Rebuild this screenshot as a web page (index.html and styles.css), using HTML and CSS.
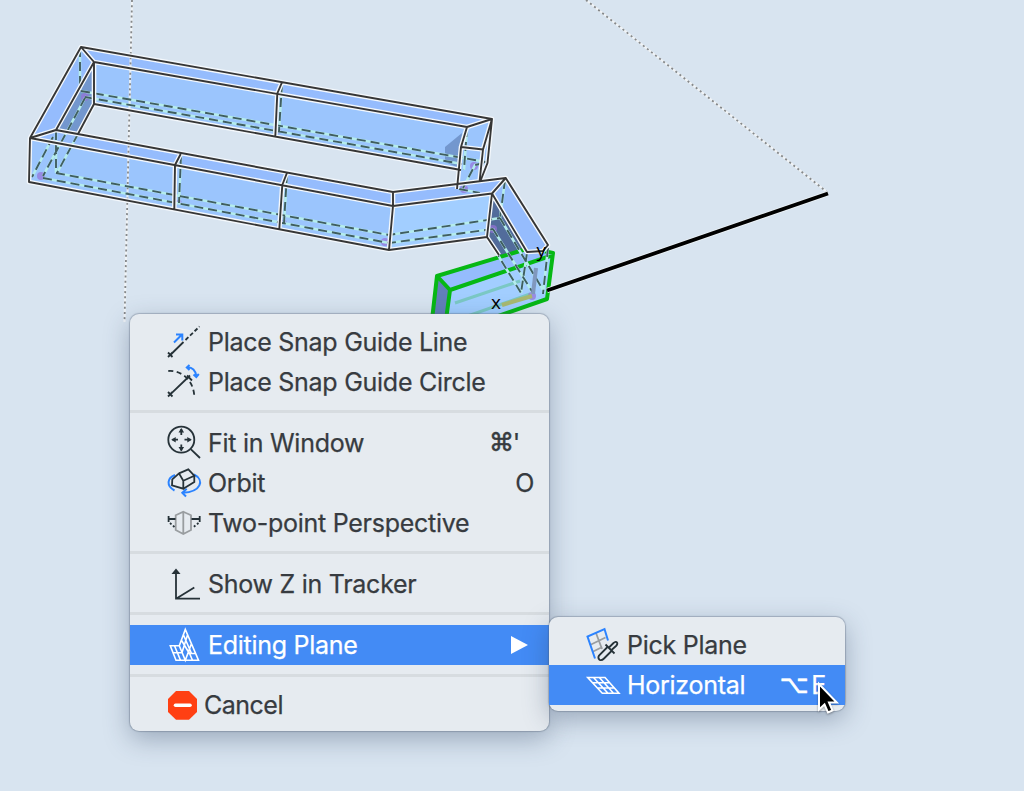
FILE: index.html
```html
<!DOCTYPE html>
<html lang="en">
<head>
    <meta charset="UTF-8">
    <meta name="viewport" content="width=device-width, initial-scale=1.0">
    <title>Editing Plane</title>
    <link rel="stylesheet" href="styles.css">
</head>
<body>
    <div class="viewport">
        <svg class="scene" width="1024" height="791" viewBox="0 0 1024 791">
            <defs>
                <path id="hidden" d="M81 91 L486 162 M85 97 L462 164 M56 173 L389 235 L500 218 M43 178 L389 243 L493 229 M80 48 V91 M56 131 V173 M282 84 L279 131 M181 155 L179 203 M287 174 L284 223 M392 208 L389 250 M85 98 L43 176 M53 137 L32 177 M78 134 L57 173 M467 128 L464 170 M505 180 L500 218 M500 218 L543 290 M493 229 L533 293 M487 237 L521 293 M527 253 L521 293 M548 248 L543 294 M484 163 L475 165 L463 188 M459 189 L480 193"/>
                <path id="edges" d="M81 47 L492 119 L467 127 L94 62Z M94 62 V104 L78 134 M94 104 L461 170 M281.700 83 L277.300 93.500 L275.300 136.500 M81 47 L30 138 M94 62 L56 130 M30 138 L56 130 L393 192 L505.700 178 L492 193.500 L393 206 L30 138 L29 182 L389 250 L487 237 L492 193.500 M180.700 154 L175 165 L174.300 208.700 M286.700 173.500 L282.300 185 L279.300 229 M393 192 V206 L389 250 M505.700 178 L548 245 L543 251 L527 252 L492 193.500 M487 237 L499 255 M467 127 L461 147 L457 189 M461 147 L483 149.500 L492 119 L487.500 163 L480 182 M483 149.500 L479.500 182"/>
                <path id="guides" d="M132 0 L124.500 322 M586 0 L827 192"/>
            </defs>

            <!-- back wall -->
            <path class="top" d="M81 47 L492 119 L467 127 L94 62Z"/>
            <path class="face" d="M94 62 L467 127 L461 147 L461 170 L94 104Z"/>
            <path class="top" d="M81 47 L94 62 L56 130 L30 138Z"/>
            <path class="shade" d="M94 62 V104 L78 134 L56 130Z"/>
            <path class="shade" d="M445 147 L462 133 L459 168 L445 162Z"/>
            <!-- wall end -->
            <path class="face" d="M467 127 L492 119 L487 163 L479 193 L457 189 L461 147Z"/>
            <!-- front wall -->
            <path class="top" d="M30 138 L56 130 L393 192 L505 178 L492 193.500 L393 206Z"/>
            <path class="face" d="M30 138 L393 206 L389 250 L29 182Z"/>
            <path class="light" d="M393 206 L492 193.500 L487 237 L389 250Z"/>
            <path class="shade-dark" d="M492 193.500 L527 252 L526 262 L503 262 L487 237Z"/>
            <!-- selected block -->
            <path class="top" d="M437 276 L530 248 L553 253 L450 290Z"/>
            <path class="light" d="M450 290 L553 253 L547 299 L490 320 H446Z"/>
            <path class="block-end" d="M437 276 L450 290 L446 320 H432Z"/>
            <path class="axis-green" d="M455 303 L520 281 M462 318 L530 294"/>
            <path class="selection" d="M432 320 L437 276 L530 248 L553 253 L547 299 L490 319 M437 276 L450 290 L446 320 M450 290 L553 255"/>
            <!-- right return -->
            <path class="top" d="M505.700 178 L548 245 L543 251 L527 252 L492 193.500Z"/>

            <use href="#guides" class="guide"/>
            <use href="#guides" class="guide-dots"/>

            <g class="markers">
                <circle cx="85" cy="97" r="4"/><circle cx="41" cy="176" r="4"/>
                <circle cx="179" cy="202" r="2.500"/><circle cx="284" cy="222" r="2.500"/>
                <circle cx="279" cy="131" r="2.500"/><circle cx="385" cy="242" r="4"/>
                <circle cx="474" cy="166" r="4"/><circle cx="464" cy="189" r="4"/>
                <circle cx="493" cy="229" r="4"/><circle cx="532" cy="296" r="4"/>
            </g>

            <use href="#hidden" class="hidden-base"/>
            <use href="#hidden" class="hidden-dash"/>
            <use href="#edges" class="edge-halo"/>
            <use href="#edges" class="edge"/>

            <path class="axis-x" d="M502 305 L532 296"/>
            <path class="axis-y" d="M533 294 L536 268"/>
            <path class="ray-halo" d="M547 290.500 L828 193.500"/>
            <path class="ray" d="M547 290.500 L828 193.500"/>
            <text class="axis-label" x="491" y="309">x</text>
            <text class="axis-label" x="536.500" y="257">y</text>
        </svg>

        <div class="menu main-menu">
            <div class="item">
                <svg class="icon" viewBox="0 0 40 40">
                    <path d="M4 30.500 L8.500 35 M8.500 30.500 L4 35 M6.300 33 L19.500 20"/>
                    <path d="M21.500 18 L35.500 4.500" stroke-dasharray="4 2.300"/>
                    <path class="blue" d="M10 20.500 L18 12.500 M12 12.500 H18.300 V18.500"/>
                </svg>
                <span class="label">Place Snap Guide Line</span>
            </div>
            <div class="item">
                <svg class="icon" viewBox="0 0 40 40">
                    <path d="M4 30 L8.500 34.500 M8.500 30 L4 34.500 M6.300 32.300 L26 13.500 M23 13.500 L28 18.500"/>
                    <path d="M4.300 9 C18 8 30 19 30.300 35" stroke-dasharray="5 3.500"/>
                    <path class="blue" d="M23.500 5.300 Q31 5.500 32.300 14 M25.500 3 L22.800 5.500 L25.500 8 M29.500 12.500 L32.300 15 L34.800 12"/>
                </svg>
                <span class="label">Place Snap Guide Circle</span>
            </div>
            <div class="separator"></div>
            <div class="item">
                <svg class="icon" viewBox="0 0 40 40">
                    <circle cx="17.300" cy="16.700" r="13"/>
                    <path d="M27 26.300 L36 35 M17.300 6 V12 M17.300 21.500 V27.500 M8.500 16.700 H14 M20.500 16.700 H26.500"/>
                    <path class="fill" d="M14.500 9.500 L17.300 5 L20.100 9.500Z M14.500 24 L17.300 28.500 L20.100 24Z M11.700 13.900 L7.200 16.700 L11.700 19.500Z M23.300 13.900 L27.800 16.700 L23.300 19.500Z"/>
                </svg>
                <span class="label">Fit in Window</span>
                <span class="keys keys-fit"><span class="symbol command">⌘</span>'</span>
            </div>
            <div class="item">
                <svg class="icon" viewBox="0 0 40 40">
                    <path class="blue" d="M11 12 C3 15 2 23 10.500 27.500 M30 11.500 C41 17 37 29 19 29.700 M22.700 25.700 L18.300 29.700 L22 33.500"/>
                    <path d="M8.300 16.300 L15 10.300 L19.300 17.700 V25.700 L8 22.300Z M15 10.300 L24.300 6.300 L30.300 12.700 L19.300 17.700 M30.300 12.700 V19 L19.300 25.700"/>
                </svg>
                <span class="label">Orbit</span>
                <span class="keys">O</span>
            </div>
            <div class="item">
                <svg class="icon" viewBox="0 0 40 40">
                    <path class="gray" d="M19.300 8.700 L27 12.300 V27 L19.300 31 L11.700 27 V12.300Z M19.300 8.700 V31"/>
                    <path d="M4.600 13 V19 M4.600 16 H11.500 M27.500 16 H35.700 M35.700 13 V19"/>
                    <path d="M6 20 L11 24.500 M34.500 20 L29 24.500" stroke-dasharray="2 2"/>
                </svg>
                <span class="label">Two-point Perspective</span>
            </div>
            <div class="separator"></div>
            <div class="item">
                <svg class="icon" viewBox="0 0 40 40">
                    <path d="M12 7 V34.700 H36 M12 34.700 L30.300 23.500"/>
                    <path class="fill" d="M7.500 10 L12 4.500 L16.500 10Z"/>
                </svg>
                <span class="label">Show Z in Tracker</span>
            </div>
            <div class="separator"></div>
            <div class="item selected">
                <svg class="icon" viewBox="0 0 40 40">
                    <path d="M14.800 20.700 H6.300 L12 35.300 H34.500 L21.300 4.500 L15.300 20.700 L21.300 35.300 L27.500 18.500 M9 27.800 H17.500 M10.500 20.700 L16.500 35.300 M17.300 15 L24.500 27 M19.500 10 L27.500 28.500 M23.500 10 L18 27.500 M24.500 28.500 H31.500 M24.500 26 L28.500 35.300"/>
                </svg>
                <span class="label">Editing Plane</span>
                <svg class="arrow" viewBox="0 0 17 18"><path d="M0 0 L17 9 L0 18Z"/></svg>
            </div>
            <div class="separator last"></div>
            <div class="item">
                <svg class="icon" viewBox="0 0 40 40">
                    <path class="stop" d="M12 6 H25 L33 14 V27 L25 34.700 H12 L4 27 V14Z"/>
                    <path class="stop-bar" d="M11.500 20.200 H26"/>
                </svg>
                <span class="label cancel">Cancel</span>
            </div>
        </div>

        <div class="menu sub-menu">
            <div class="item">
                <svg class="icon" viewBox="0 0 40 40">
                    <path class="gray" d="M7 20 L22.500 12.500 M13 8 L19 24 M9.700 26.700 L19.300 22"/>
                    <path class="blue" d="M12 33.500 L4.500 11.500 L21.500 4 L25 15.500"/>
                    <path d="M24.500 22 L16 30.500 Q14.500 33 16.500 34.700 Q18.500 36 21 33.500 L29 25.500"/>
                    <path d="M22.500 19.500 L31.500 28.500"/>
                    <path d="M26 22.500 L30.500 18 Q33 16 34 17.500 Q35 19 33 21 L28.500 25"/>
                </svg>
                <span class="label">Pick Plane</span>
            </div>
            <div class="item selected">
                <svg class="icon" viewBox="0 0 40 40">
                    <path d="M4.700 12.500 H22 L36 28.300 H19.300Z M10.500 12.500 L25 28.300 M16.300 12.500 L30.500 28.300 M9.500 17.800 H26.700 M14.400 23 H31.400"/>
                </svg>
                <span class="label">Horizontal</span>
                <span class="keys keys-horizontal"><span class="symbol option">⌥</span>E</span>
            </div>
        </div>

        <svg class="cursor" viewBox="0 0 24 34">
            <path d="M3 3 V28.500 L8.500 23.500 L12 31.500 L16.500 29.500 L13 21.500 H20.800Z"/>
        </svg>
    </div>
</body>
</html>
```
FILE: styles.css
```css
body {
    margin: 0;
    background: #d8e4f0;
    font-family: Inter, "Liberation Sans", sans-serif;
    overflow: hidden;
}
.viewport {
    position: relative;
    width: 1024px;
    height: 791px;
    overflow: hidden;
}
.scene {
    display: block;
}

/* model */
.top { fill: #95bcfd; }
.face { fill: #9bc5fd; }
.light { fill: #a2ceff; }
.shade { fill: #7397ce; }
.shade-dark { fill: #526c9b; }
.block-end { fill: #627fb9; }
.selection, .edge, .edge-halo, .hidden-base, .hidden-dash, .guide, .guide-dots, .ray, .ray-halo {
    fill: none;
    stroke-linejoin: round;
}
.selection { stroke: #06b814; stroke-width: 4; }
.edge-halo { stroke: #f4f8fc; stroke-width: 4.6; }
.edge { stroke: #363636; stroke-width: 1.9; }
.hidden-base { stroke: #b4ecec; stroke-width: 2.6; }
.hidden-dash { stroke: #405d61; stroke-width: 1.9; stroke-dasharray: 9 5; }
.guide { stroke: #f5f6f7; stroke-width: 2.2; stroke-opacity: .8; }
.guide-dots { stroke: #85888a; stroke-width: 1.8; stroke-dasharray: 2 3.2; }
.markers { fill: #9672d8; fill-opacity: .7; }
.axis-green { stroke: #7bc8c4; stroke-width: 3; }
.axis-x { stroke: #a9b970; stroke-width: 4; }
.axis-y { stroke: #8098be; stroke-width: 4; }
.ray-halo { stroke: #eef4f8; stroke-width: 5.4; }
.ray { stroke: #000; stroke-width: 3.8; }
.axis-label {
    font: 19px "Open Sans", sans-serif;
    fill: #000;
}

/* menus */
.menu {
    position: absolute;
    box-sizing: border-box;
    padding-top: 8px;
    background: #e6ebf0;
    border-radius: 9px;
    box-shadow: 0 0 1px 1px rgba(80, 95, 115, .35), 0 8px 26px rgba(45, 65, 95, .36);
}
.main-menu {
    left: 130px;
    top: 314px;
    width: 419px;
    height: 417px;
}
.sub-menu {
    left: 549px;
    top: 617px;
    width: 296px;
    height: 94px;
}
.item {
    display: flex;
    align-items: center;
    height: 40px;
    padding: 0 15px 0 34px;
    color: #373b40;
    font-size: 25px;
    letter-spacing: -.27px;
    white-space: nowrap;
}
.selected {
    background: #438bf5;
    color: #fff;
}
.icon {
    flex: none;
    width: 40px;
    height: 40px;
    margin-right: 4px;
    fill: none;
    stroke: #263238;
    stroke-width: 1.8;
}
.icon .blue { stroke: #2b83ff; stroke-width: 2; }
.icon .gray { stroke: #999da0; }
.icon .fill { fill: #263238; stroke: none; }
.icon .stop { fill: #ff4013; stroke: none; }
.icon .stop-bar { stroke: #fff; stroke-width: 3.5; stroke-linecap: round; }
.selected .icon { stroke: #fff; stroke-width: 1.6; }
.label, .keys {
    padding-bottom: 1px;
    -webkit-text-stroke: .25px currentColor;
}
.label {
    flex: 1;
}
.cancel {
    margin-left: -4px;
    letter-spacing: -.5px;
}
.keys {
    display: flex;
    align-items: center;
}
.keys-fit { margin-right: 14px; }
.keys-horizontal { margin-right: 4px; }
.symbol {
    font-family: "DejaVu Sans", sans-serif;
    font-size: 25px;
    line-height: 39px;
    -webkit-text-stroke: .6px currentColor;
}
.command { margin-right: -1px; }
.option { margin-right: 3px; }
.arrow {
    width: 17px;
    height: 18px;
    margin-right: 6px;
    fill: #fff;
}
.separator {
    height: 3px;
    margin: 8px 0 10px;
    background: #d7dce0;
}
.last {
    margin: 9px 0 8px;
}
.cursor {
    position: absolute;
    left: 816px;
    top: 681px;
    width: 24px;
    height: 34px;
    fill: #000;
    stroke: #fff;
    stroke-width: 2;
    filter: drop-shadow(0 1px 1px rgba(0, 0, 0, .35));
}
```
